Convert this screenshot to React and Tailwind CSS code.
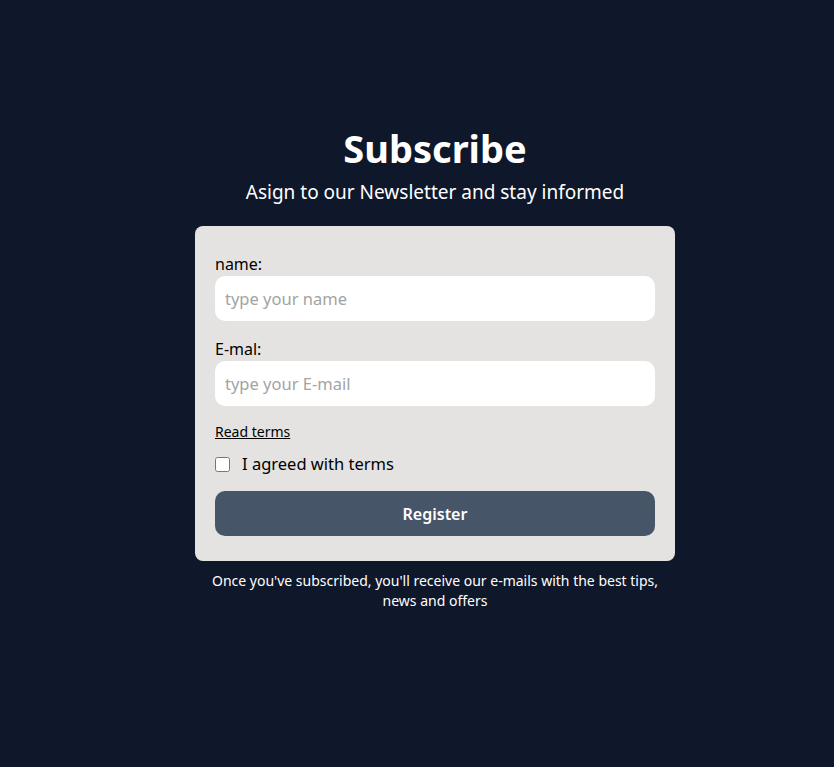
export default function App() {
  return (
    <div
      className="min-h-screen bg-[#0f172a] flex flex-col items-center pt-[124px] pl-9"
      style={{ fontFamily: '"Segoe UI", "Noto Sans", "Open Sans", sans-serif' }}
    >
      <h1 className="text-[38px] leading-[48px] font-bold text-white">Subscribe</h1>
      <p className="mt-[6px] text-[19px] leading-7 text-white">Asign to our Newsletter and stay informed</p>

      <form
        className="mt-5 w-[480px] bg-[#e5e3e1] rounded-lg px-5 pt-[26px] pb-[25px] flex flex-col"
        onSubmit={(e) => e.preventDefault()}
      >
        <label className="text-base leading-6 text-black" htmlFor="name">name:</label>
        <input
          id="name"
          type="text"
          placeholder="type your name"
          className="h-[45px] rounded-[10px] bg-white px-[10px] text-[16.5px] text-black placeholder:text-[#a3a3a3] outline-none"
        />

        <label className="mt-4 text-base leading-6 text-black" htmlFor="email">E-mal:</label>
        <input
          id="email"
          type="email"
          placeholder="type your E-mail"
          className="h-[45px] rounded-[10px] bg-white px-[10px] text-[16.5px] text-black placeholder:text-[#a3a3a3] outline-none"
        />

        <a href="#" className="mt-4 self-start text-sm leading-5 text-black underline">Read terms</a>

        <label className="mt-2 flex items-center gap-3 text-[16.5px] leading-7 text-black">
          <input type="checkbox" className="w-[15px] h-[15px] m-0" />
          I agreed with terms
        </label>

        <button
          type="submit"
          className="mt-[13px] h-[45px] rounded-[10px] bg-[#475569] text-white text-base font-semibold"
        >
          Register
        </button>
      </form>

      <p className="mt-[10px] w-[470px] text-center text-sm leading-5 text-white">
        Once you've subscribed, you'll receive our e-mails with the best tips, news and offers
      </p>
    </div>
  );
}
